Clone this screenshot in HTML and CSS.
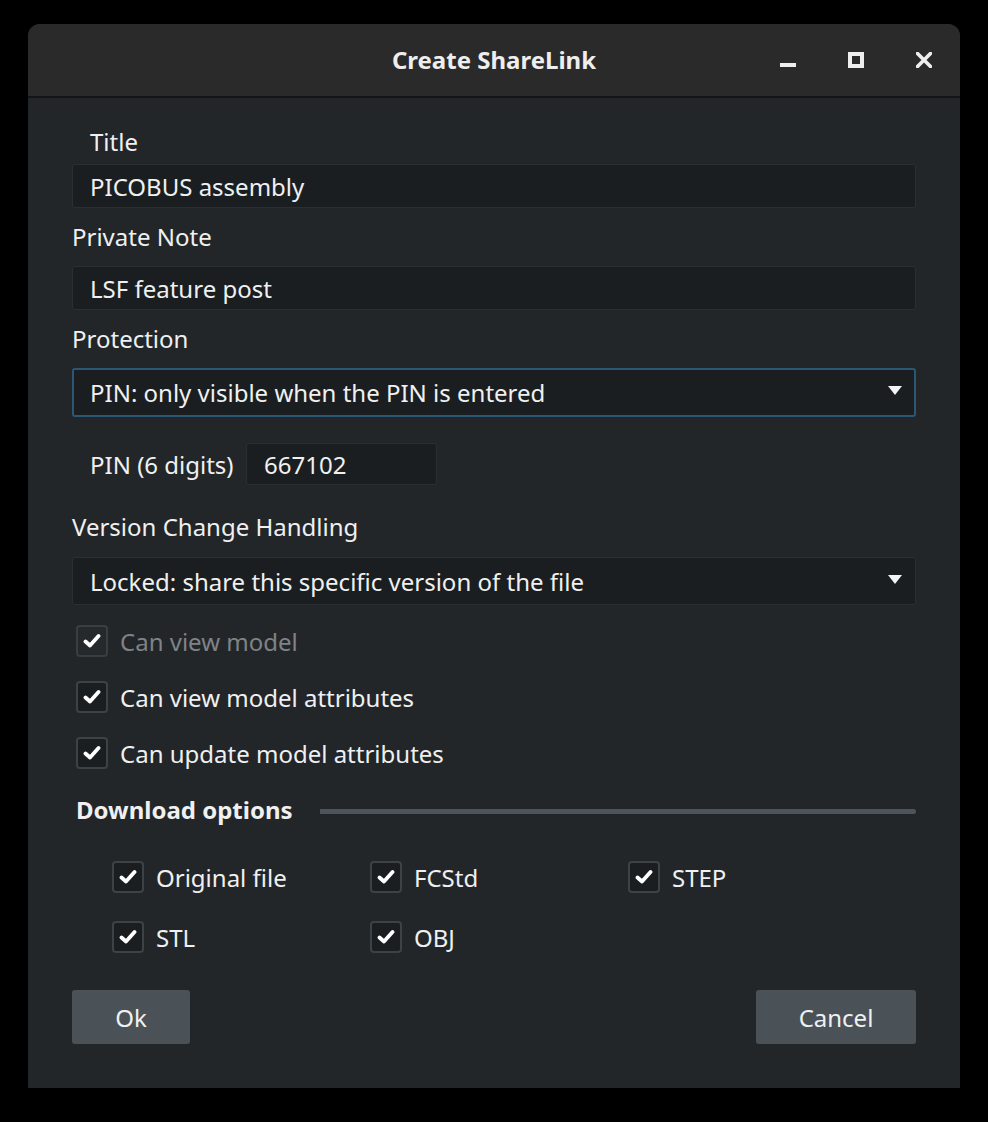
FILE: index.html
```html
<!DOCTYPE html>
<html>
<head>
<meta charset="utf-8">
<link rel="stylesheet" href="styles.css">
</head>
<body>
<div class="window">
  <div class="titlebar">
    <div class="title">Create ShareLink</div>
    <div class="controls">
      <svg class="ctl" width="16" height="16" viewBox="0 0 16 16"><rect x="0" y="11" width="16" height="4" fill="#eeeeee"/></svg>
      <svg class="ctl" width="16" height="16" viewBox="0 0 16 16"><rect x="2" y="2" width="12" height="12" fill="none" stroke="#eeeeee" stroke-width="4"/></svg>
      <svg class="ctl" width="16" height="16" viewBox="0 0 16 16"><path d="M1.5 1.5 L14.5 14.5 M14.5 1.5 L1.5 14.5" stroke="#eeeeee" stroke-width="3.6" stroke-linecap="square"/></svg>
    </div>
  </div>
  <div class="content">
    <div class="label indent lbl-title">Title</div>
    <div class="field">PICOBUS assembly</div>
    <div class="label lbl-gap">Private Note</div>
    <div class="field">LSF feature post</div>
    <div class="label lbl-gap">Protection</div>
    <div class="combo focused">
      <span>PIN: only visible when the PIN is entered</span>
      <svg class="arrow" width="14" height="10" viewBox="0 0 14 10"><path d="M0 0 L14 0 L7 9 Z" fill="#f2f4f5"/></svg>
    </div>
    <div class="pin-row">
      <span class="pin-label">PIN (6 digits)</span>
      <div class="field pin-field">667102</div>
    </div>
    <div class="label lbl-version">Version Change Handling</div>
    <div class="combo">
      <span>Locked: share this specific version of the file</span>
      <svg class="arrow" width="14" height="10" viewBox="0 0 14 10"><path d="M0 0 L14 0 L7 9 Z" fill="#f2f4f5"/></svg>
    </div>
    <div class="checks">
      <div class="check-row disabled"><span class="box"><svg width="18" height="16" viewBox="0 0 18 16"><path d="M2.5 8.5 L7 12.5 L15.5 3" fill="none" stroke="#ffffff" stroke-width="3.8" stroke-linecap="round" stroke-linejoin="round"/></svg></span>Can view model</div>
      <div class="check-row"><span class="box"><svg width="18" height="16" viewBox="0 0 18 16"><path d="M2.5 8.5 L7 12.5 L15.5 3" fill="none" stroke="#ffffff" stroke-width="3.8" stroke-linecap="round" stroke-linejoin="round"/></svg></span>Can view model attributes</div>
      <div class="check-row"><span class="box"><svg width="18" height="16" viewBox="0 0 18 16"><path d="M2.5 8.5 L7 12.5 L15.5 3" fill="none" stroke="#ffffff" stroke-width="3.8" stroke-linecap="round" stroke-linejoin="round"/></svg></span>Can update model attributes</div>
      <div class="section">
        <span class="section-title">Download options</span>
        <span class="section-line"></span>
      </div>
    </div>
    <div class="downloads">
      <div class="check-row"><span class="box"><svg width="18" height="16" viewBox="0 0 18 16"><path d="M2.5 8.5 L7 12.5 L15.5 3" fill="none" stroke="#ffffff" stroke-width="3.8" stroke-linecap="round" stroke-linejoin="round"/></svg></span>Original file</div>
      <div class="check-row"><span class="box"><svg width="18" height="16" viewBox="0 0 18 16"><path d="M2.5 8.5 L7 12.5 L15.5 3" fill="none" stroke="#ffffff" stroke-width="3.8" stroke-linecap="round" stroke-linejoin="round"/></svg></span>FCStd</div>
      <div class="check-row"><span class="box"><svg width="18" height="16" viewBox="0 0 18 16"><path d="M2.5 8.5 L7 12.5 L15.5 3" fill="none" stroke="#ffffff" stroke-width="3.8" stroke-linecap="round" stroke-linejoin="round"/></svg></span>STEP</div>
      <div class="check-row"><span class="box"><svg width="18" height="16" viewBox="0 0 18 16"><path d="M2.5 8.5 L7 12.5 L15.5 3" fill="none" stroke="#ffffff" stroke-width="3.8" stroke-linecap="round" stroke-linejoin="round"/></svg></span>STL</div>
      <div class="check-row"><span class="box"><svg width="18" height="16" viewBox="0 0 18 16"><path d="M2.5 8.5 L7 12.5 L15.5 3" fill="none" stroke="#ffffff" stroke-width="3.8" stroke-linecap="round" stroke-linejoin="round"/></svg></span>OBJ</div>
    </div>
    <div class="buttons">
      <button class="btn btn-ok">Ok</button>
      <button class="btn btn-cancel">Cancel</button>
    </div>
  </div>
</div>
</body>
</html>
```

FILE: styles.css
```css
html, body {
  margin: 0;
  padding: 0;
  background: #000000;
}
body {
  width: 988px;
  height: 1122px;
  overflow: hidden;
  font-family: "Noto Sans", "Open Sans", sans-serif;
  color: #eff0f1;
}
.window {
  margin: 24px 0 0 28px;
  width: 932px;
  height: 1064px;
  border-radius: 12px 12px 0 0;
  overflow: hidden;
  background: #232629;
  display: flex;
  flex-direction: column;
}
.titlebar {
  height: 72px;
  flex: none;
  background: #2a2a2a;
  border-bottom: 2px solid #141414;
  position: relative;
  display: flex;
  align-items: center;
  justify-content: center;
}
.title {
  font-weight: bold;
  font-size: 24px;
  color: #eeeeee;
  margin-top: -1px;
}
.controls {
  position: absolute;
  right: 28px;
  top: 28px;
  display: flex;
  gap: 52px;
}
.ctl {
  display: block;
}
.content {
  padding: 0 44px;
  display: flex;
  flex-direction: column;
  font-size: 24px;
}
.label {
  height: 30px;
  line-height: 30px;
  flex: none;
}
.indent {
  padding-left: 18px;
}
.lbl-title {
  margin-top: 29px;
  margin-bottom: 7px;
}
.lbl-gap {
  margin-top: 14px;
  margin-bottom: 14px;
}
.lbl-version {
  margin-top: 27px;
  margin-bottom: 15px;
}
.field {
  height: 44px;
  flex: none;
  box-sizing: border-box;
  background: #1b1e20;
  border: 1px solid #2b2f33;
  border-radius: 3px;
  padding-left: 17px;
  display: flex;
  align-items: center;
}
.combo {
  height: 48px;
  flex: none;
  box-sizing: border-box;
  background: #1b1e20;
  border: 1px solid #2b2f33;
  border-radius: 3px;
  padding: 0 13px 0 17px;
  display: flex;
  align-items: center;
  justify-content: space-between;
}
.combo.focused {
  height: 49px;
  border: 2px solid #2b5674;
  padding-left: 16px;
  padding-right: 12px;
}
.arrow {
  display: block;
  margin-top: -3px;
}
.pin-row {
  margin-top: 26px;
  height: 42px;
  flex: none;
  display: flex;
  align-items: center;
  padding-left: 18px;
}
.pin-label {
  width: 156px;
}
.pin-field {
  width: 191px;
  height: 42px;
}
.checks {
  margin-top: 8px;
  display: flex;
  flex-direction: column;
}
.check-row {
  height: 56px;
  display: flex;
  align-items: center;
  padding-left: 4px;
}
.check-row.disabled {
  color: #7e8387;
}
.box {
  width: 32px;
  height: 32px;
  box-sizing: border-box;
  border: 2px solid #3d4246;
  border-radius: 4px;
  background: #1b1e20;
  display: flex;
  align-items: center;
  justify-content: center;
  margin-right: 12px;
  flex: none;
}
.disabled .box {
  background: #25292c;
  border-color: #393e42;
}
.box svg {
  display: block;
}
.section {
  height: 56px;
  display: flex;
  align-items: center;
  padding-left: 4px;
}
.section-title {
  font-weight: bold;
  width: 244px;
  flex: none;
}
.section-line {
  flex: 1;
  height: 5px;
  background: #4d545b;
  border-radius: 0 3px 3px 0;
  margin-top: 4px;
}
.downloads {
  margin-top: 10px;
  display: grid;
  grid-template-columns: 258px 258px 1fr;
  padding-left: 36px;
}
.downloads .check-row {
  height: 60px;
  padding-left: 4px;
}
.buttons {
  margin-top: 23px;
  display: flex;
  justify-content: space-between;
}
.btn {
  height: 54px;
  background: #4b5257;
  border: none;
  border-radius: 3px;
  color: #eff0f1;
  font-family: "Noto Sans", "Open Sans", sans-serif;
  font-size: 24px;
  padding: 0;
}
.btn-ok {
  width: 118px;
}
.btn-cancel {
  width: 160px;
}
```
